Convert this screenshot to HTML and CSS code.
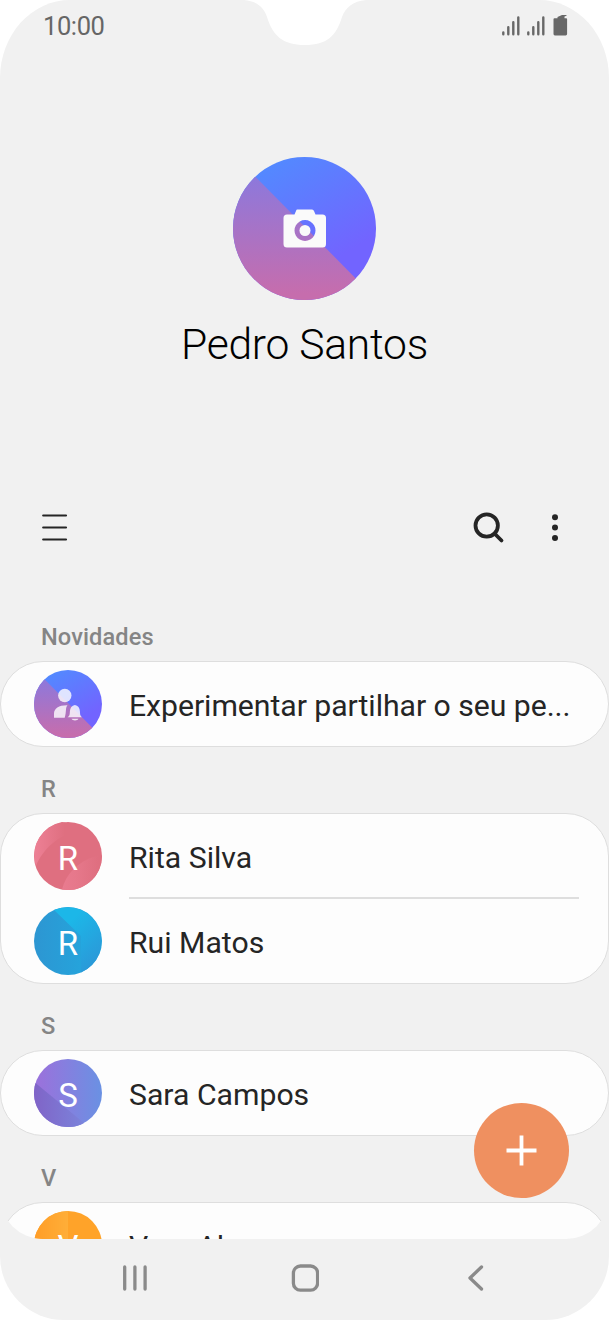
FILE: index.html
```html
<!DOCTYPE html>
<html lang="pt">
<head>
<meta charset="utf-8">
<title>Contactos</title>
<link rel="stylesheet" href="styles.css">
</head>
<body>
<div class="phone">
  <svg class="notch" width="130" height="46" viewBox="0 0 130 46"><path d="M4 0C17 1 24 8 27 17C33 36 43 45 65 45S96 36 102 17C105 8 113 1 126 0Z"/></svg>
  <main class="content">
    <header class="status">
      <span class="time">10:00</span>
      <svg width="66" height="24" viewBox="0 0 66 24">
        <g class="bars"><path d="M1.300 18.500v1.700M6.300 13.300v6.900M11.300 8.300v11.900M16.300 3.500v16.700M26.300 18.500v1.700M31.300 13.300v6.900M36.300 8.300v11.900M41.300 3.500v16.700"/></g>
        <path class="battery" d="M55.500 3 60 1h4.500v.8l-2 .7v1.800h1.600q1 0 1 1V20q0 1.400-1.400 1.400H52.900Q51.500 21.400 51.500 20V5.300q0-1 1-1h3Z"/>
      </svg>
    </header>
    <section class="profile">
      <svg class="profile-photo" width="144" height="144" viewBox="0 0 144 144">
        <defs>
          <linearGradient id="blue" x1=".2" y1="0" x2=".8" y2="1"><stop offset=".08" stop-color="#5488ff"/><stop offset=".75" stop-color="#7264ff"/></linearGradient>
          <linearGradient id="pink" x1="0" y1="0" x2="0" y2="1"><stop offset=".1" stop-color="#8979df"/><stop offset=".95" stop-color="#c66dad"/></linearGradient>
          <clipPath id="disc"><circle cx="71.500" cy="71.500" r="71.500"/></clipPath>
        </defs>
        <g clip-path="url(#disc)"><path fill="url(#blue)" d="M0 0h144v144H0z"/><path fill="url(#pink)" d="M0-3 144 143V144H0z"/></g>
        <path fill="#fafafa" fill-rule="evenodd" d="M64 52.500h15q1.500 0 2 1.500l1.500 3.500H89.500q3.500 0 3.500 3.500V87Q93 90.500 89.500 90.500H54Q50.500 90.500 50.500 87v-26Q50.500 57.500 54 57.500H61.500L63 54Q63.300 52.500 64 52.500ZM72 63a10.500 10.500 0 1 0 .01 0Z"/>
        <circle cx="72" cy="73.500" r="5.500" fill="#fafafa"/>
      </svg>
      <h1 class="name">Pedro Santos</h1>
    </section>
    <nav class="toolbar">
      <svg width="26" height="28" viewBox="0 0 26 28"><path class="menu" d="M1.200 1.500H24M1.200 13.500H24M1.200 25.500H24"/></svg>
      <div class="actions">
        <svg width="32" height="32" viewBox="0 0 32 32"><circle class="search" cx="13.700" cy="13.500" r="11.200"/><path class="search" d="m21.500 21.500 7 7"/></svg>
        <svg width="8" height="30" viewBox="0 0 8 30"><circle cx="4" cy="4.200" r="3"/><circle cx="4" cy="14.600" r="3"/><circle cx="4" cy="24.900" r="3"/></svg>
      </div>
    </nav>
    <section>
      <h2 class="heading">Novidades</h2>
      <div class="card">
        <div class="row">
          <svg class="avatar" viewBox="0 0 68 68">
            <g transform="scale(.4755)" clip-path="url(#disc)"><path fill="url(#blue)" d="M0 0h144v144H0z"/><path fill="url(#pink)" d="M0-3 144 143V144H0z"/></g>
            <g fill="#fff" fill-opacity=".8"><circle cx="30.800" cy="25.500" r="6.700"/><path d="M20 47.800v-4.300c0-5 5-8.500 13.500-8.300-2.300 2.500-.8 6-2.800 12.600ZM33.500 47.300c2.500-1.500 2.200-3.300 2.400-6 .2-3.400 1.900-5.800 5-6.300 3.100.5 4.900 2.900 5 6.300 .2 2.700 0 4.500 2 6ZM37.500 48.700h7c-1 2.300-6 2.300-7 0Z"/></g>
          </svg>
          <span class="label promo">Experimentar partilhar o seu pe...</span>
        </div>
      </div>
    </section>
    <section>
      <h2 class="heading">R</h2>
      <div class="card">
        <div class="row">
          <div class="avatar"><svg viewBox="0 0 68 68"><defs><linearGradient id="rose"><stop stop-color="#ed8095"/><stop offset=".7" stop-color="#df6f80"/></linearGradient><linearGradient id="rose2"><stop stop-color="#e97b8f"/><stop offset=".35" stop-color="#e6788b"/><stop offset=".9" stop-color="#df6f80"/></linearGradient></defs><circle cx="34" cy="34" r="34" fill="#df6f80"/><path fill="url(#rose)" d="M2 44C9 27 24 13 44 9Q34 0 28 0A34 34 0 0 0 2 44Z"/><path fill="url(#rose2)" d="M28 67.500C32 52 43 40 62 34h6A34 34 0 0 1 28 67.500Z"/></svg><span>R</span></div>
          <span class="label">Rita Silva</span>
        </div>
        <div class="row divided">
          <div class="avatar"><svg viewBox="0 0 68 68"><defs><linearGradient id="cyan"><stop stop-color="#2d96d2"/><stop offset="1" stop-color="#22a9df"/></linearGradient><linearGradient id="cyan2" x2=".7" y2="1"><stop offset=".3" stop-color="#1cb7e8"/><stop offset="1" stop-color="#2b98d8"/></linearGradient></defs><circle cx="34" cy="34" r="34" fill="url(#cyan)"/><path fill="url(#cyan2)" d="M20 3 47 29V65.500A34 34 0 0 0 20 3Z"/></svg><span>R</span></div>
          <span class="label">Rui Matos</span>
        </div>
      </div>
    </section>
    <section>
      <h2 class="heading">S</h2>
      <div class="card">
        <div class="row">
          <div class="avatar"><svg viewBox="0 0 68 68"><defs><linearGradient id="violet"><stop offset=".1" stop-color="#9873dc"/><stop offset="1" stop-color="#6a91e3"/></linearGradient><linearGradient id="violet2"><stop stop-color="#8064c7"/><stop offset="1" stop-color="#7b83db"/></linearGradient></defs><circle cx="34" cy="34" r="34" fill="url(#violet)"/><path fill="url(#violet2)" d="M1.500 24 50 64A34 34 0 0 1 1.500 24Z"/></svg><span>S</span></div>
          <span class="label">Sara Campos</span>
        </div>
      </div>
    </section>
    <section>
      <h2 class="heading">V</h2>
      <div class="card">
        <div class="row">
          <div class="avatar"><svg viewBox="0 0 68 68"><defs><linearGradient id="amber"><stop stop-color="#ff9d27"/><stop offset="1" stop-color="#ffae38"/></linearGradient></defs><circle cx="34" cy="34" r="34" fill="#ffa329"/><path fill="url(#amber)" d="M34 0V68A34 34 0 0 1 34 0Z"/></svg><span>V</span></div>
          <span class="label">Vera Alves</span>
        </div>
      </div>
    </section>
  </main>
  <div class="fab"><svg width="31" height="31" viewBox="0 0 31 31"><path d="M15.500 .5v30M.5 15.500h30"/></svg></div>
  <footer class="navbar">
    <svg width="26" height="28" viewBox="0 0 26 28"><path d="M2.700 3v22M12.900 3v22M23.100 3v22"/></svg>
    <svg width="28" height="28" viewBox="0 0 28 28"><rect x="2.400" y="2" width="24.200" height="24.200" rx="7"/></svg>
    <svg width="26" height="28" viewBox="0 0 26 28"><path d="M20.500 3 9 14l11.500 11"/></svg>
  </footer>
</div>
</body>
</html>
```

FILE: styles.css
```css
* { box-sizing: border-box; }
body { margin: 0; background: #fff; font-family: Roboto, "Liberation Sans", sans-serif; color: #252525; }
svg { display: block; flex: none; }
.phone { position: relative; width: 609px; height: 1320px; background: #f1f1f1; border-radius: 70px 70px 64px 64px / 78px 78px 64px 64px; overflow: hidden; }
.notch { position: absolute; left: 240px; top: 0; fill: #fff; }
.content { height: 1239px; overflow: hidden; border-radius: 0 0 43px 43px; }
.status { height: 52px; padding: 0 41px 0 43px; display: flex; align-items: center; justify-content: space-between; }
.time { font-size: 25.500px; line-height: 30px; letter-spacing: -.4px; color: #666; }
.bars { stroke: #686868; stroke-width: 2.400; stroke-linecap: round; }
.battery { fill: #686868; }
.profile { height: 438px; padding-top: 105px; display: flex; flex-direction: column; align-items: center; }
.name { margin: 18px 0 0; font-size: 42.600px; line-height: 50px; font-weight: 300; letter-spacing: -.25px; color: #000; white-space: nowrap; }
.toolbar { height: 76px; padding: 0 50px 0 42px; display: flex; align-items: center; justify-content: space-between; fill: #252525; }
.menu { stroke: #252525; stroke-width: 2.200; stroke-linecap: round; }
.search { fill: none; stroke: #252525; stroke-width: 3.800; stroke-linecap: round; }
.actions { display: flex; align-items: center; gap: 46px; }
.toolbar + section { padding-top: 29px; }
.heading { margin: 0; height: 66px; padding: 27px 0 0 41px; font-size: 23.600px; line-height: 30px; letter-spacing: .1px; font-weight: 500; color: #858585; }
.card { background: #fdfdfd; border: 1px solid #dedede; border-radius: 43px; }
.row { position: relative; height: 84px; padding-left: 33px; display: flex; align-items: center; gap: 27px; }
.row:not(:last-child) { height: 85px; padding-bottom: 1px; }
.divided::before { content: ""; position: absolute; left: 128px; right: 29px; top: -2px; height: 1.500px; background: #dedede; }
.avatar { width: 68px; height: 68px; flex: none; display: grid; place-items: center; color: #fff; font-size: 33px; line-height: 40px; }
.avatar > * { grid-area: 1 / 1; }
.avatar > svg { width: 68px; height: 68px; }
.avatar > span { padding-top: 5px; }
.label { padding-top: 4px; font-size: 30.200px; line-height: 38px; white-space: nowrap; }
.promo { letter-spacing: -.04px; }
.fab { position: absolute; left: 473.500px; top: 1103px; width: 95px; height: 95px; border-radius: 50%; background: #ef9060; display: grid; place-items: center; }
.fab svg { stroke: #fff; stroke-width: 3.800; }
.navbar { height: 81px; padding: 0 122px 4px; display: flex; align-items: center; justify-content: space-between; }
.navbar svg { fill: none; stroke: #8a8a8a; stroke-width: 3.300; stroke-linecap: round; stroke-linejoin: round; }
```
